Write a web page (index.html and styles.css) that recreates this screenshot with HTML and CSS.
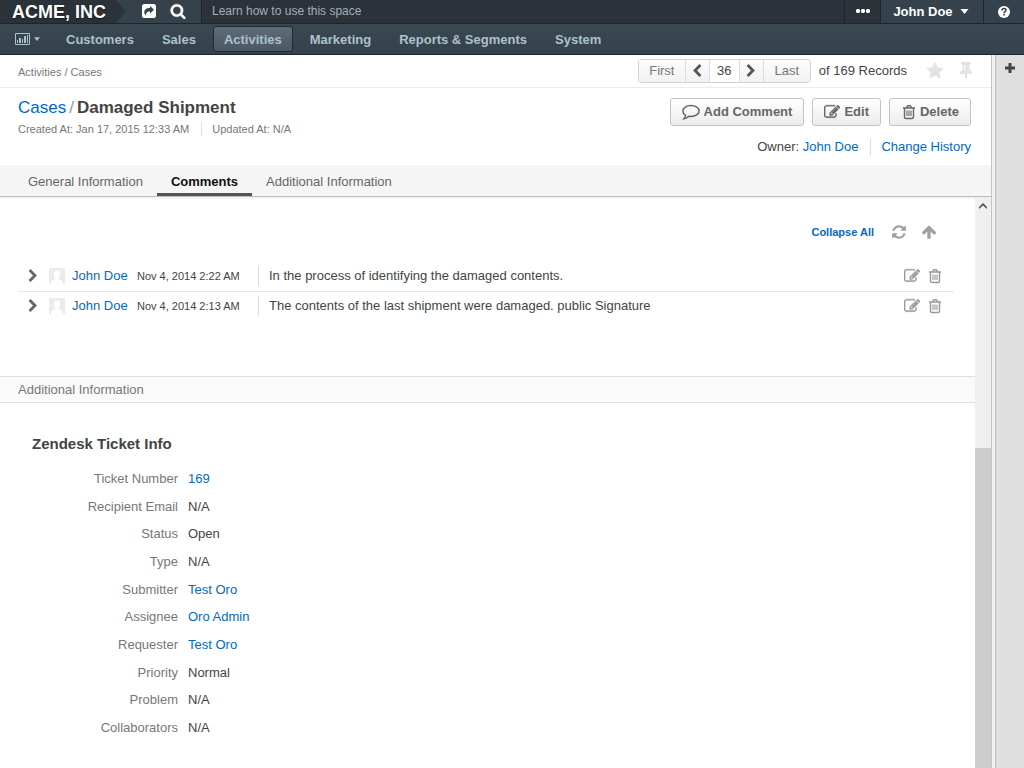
FILE: index.html
```html
<!DOCTYPE html>
<html lang="en">
<head>
<meta charset="utf-8">
<title>Damaged Shipment - Cases - Activities</title>
<link rel="stylesheet" href="styles.css">
</head>
<body>
<svg class="sprite" aria-hidden="true">
  <symbol id="chevron-right" viewBox="0 0 1792 1792"><path d="M1363 877l-742 742q-19 19-45 19t-45-19l-166-166q-19-19-19-45t19-45l531-531-531-531q-19-19-19-45t19-45l166-166q19-19 45-19t45 19l742 742q19 19 19 45t-19 45z"/></symbol>
  <symbol id="chevron-left" viewBox="0 0 1792 1792"><path d="M1427 301l-531 531 531 531q19 19 19 45t-19 45l-166 166q-19 19-45 19t-45-19l-742-742q-19-19-19-45t19-45l742-742q19-19 45-19t45 19l166 166q19 19 19 45t-19 45z"/></symbol>
  <symbol id="edit" viewBox="0 0 1792 1792"><path d="M888 1184l116-116-152-152-116 116v56h96v96h56zm440-720q-16-16-33 1l-350 350q-17 17-1 33t33-1l350-350q17-17 1-33zm80 594v190q0 119-84.5 203.5t-203.5 84.5h-832q-119 0-203.5-84.5t-84.5-203.5v-832q0-119 84.5-203.5t203.5-84.5h832q63 0 117 25 15 7 18 23 3 17-9 29l-49 49q-14 14-32 8-23-6-45-6h-832q-66 0-113 47t-47 113v832q0 66 47 113t113 47h832q66 0 113-47t47-113v-126q0-13 9-22l64-64q15-15 35-7t20 29zm-96-738l288 288-672 672h-288v-288zm444 132l-92 92-288-288 92-92q28-28 68-28t68 28l152 152q28 28 28 68t-28 68z" stroke="currentColor" stroke-width="40"/></symbol>
  <symbol id="trash" viewBox="0 0 14 16"><path d="M1 4h12M5 4V2.500C5 2 5.500 1.700 6 1.700h2c.5 0 1 .3 1 .8V4M2.500 4v9c0 .9.600 1.500 1.500 1.500h6c.9 0 1.500-.6 1.500-1.500V4" fill="none" stroke="currentColor" stroke-width="1.400"/><path d="M5 6.500V12M7 6.500V12M9 6.500V12" fill="none" stroke="currentColor" stroke-width="1.100"/></symbol>
  <symbol id="refresh" viewBox="0 0 1792 1792"><path d="M1639 1056q0 5-1 7-64 268-268 434.500t-478 166.500q-146 0-282.500-55t-243.500-157l-129 129q-19 19-45 19t-45-19-19-45v-448q0-26 19-45t45-19h448q26 0 45 19t19 45-19 45l-137 137q71 66 161 102t187 36q134 0 250-65t186-179q11-17 53-117 8-23 30-23h192q13 0 22.500 9.500t9.500 22.500zm25-800v448q0 26-19 45t-45 19h-448q-26 0-45-19t-19-45 19-45l138-138q-148-137-349-137-134 0-250 65t-186 179q-11 17-53 117-8 23-30 23h-199q-13 0-22.500-9.500t-9.500-22.500v-7q65-268 270-434.500t480-166.500q146 0 284 55.500t245 156.500l130-129q19-19 45-19t45 19 19 45z"/></symbol>
  <symbol id="arrow-up" viewBox="0 0 1792 1792"><path d="M1675 971q0 51-37 90l-75 75q-38 38-91 38-54 0-90-38l-294-293v704q0 52-37.500 84.500t-90.500 32.500h-128q-53 0-90.500-32.500t-37.500-84.500v-704l-294 293q-36 38-90 38t-90-38l-75-75q-38-38-38-90 0-53 38-91l651-651q35-37 90-37 54 0 91 37l651 651q37 39 37 91z"/></symbol>
  <symbol id="star" viewBox="0 0 1792 1792"><path d="M1728 647q0 22-26 48l-363 354 86 500q1 7 1 20 0 21-10.500 35.500t-30.500 14.500q-19 0-40-12l-449-236-449 236q-22 12-40 12-21 0-31.500-14.500t-10.500-35.500q0-6 2-20l86-500-364-354q-25-27-25-48 0-37 56-46l502-73 225-455q19-41 49-41t49 41l225 455 502 73q56 9 56 46z"/></symbol>
  <symbol id="search" viewBox="0 0 1792 1792"><path d="M1216 832q0-185-131.500-316.500t-316.500-131.500-316.500 131.500-131.500 316.500 131.500 316.500 316.500 131.500 316.500-131.500 131.500-316.500zm512 832q0 52-38 90t-90 38q-54 0-90-38l-343-342q-179 124-399 124-143 0-273.500-55.500t-225-150-150-225-55.500-273.500 55.500-273.500 150-225 225-150 273.500-55.500 273.500 55.500 225 150 150 225 55.500 273.500q0 220-124 399l343 343q37 37 37 90z" stroke="currentColor" stroke-width="50"/></symbol>
  <symbol id="pin" viewBox="0 0 14 18"><path d="M2 0h10v2.500h-1.500V8L13 9.500V12H8v4l-1 2-1-2v-4H1V9.500L3.500 8V2.500H2z"/><path d="M5.500 3v4.500" stroke="#fff" stroke-width="1"/></symbol>
  <symbol id="comment" viewBox="0 0 16 14"><path d="M8 1.200c4 0 7.200 2.100 7.200 4.900S12 11 8 11c-.7 0-1.300-.1-1.900-.2C5 11.900 3.600 12.700 1.800 13c.8-.9 1.200-1.800 1.400-3C1.700 9.100.8 7.700.8 6.100.8 3.300 4 1.200 8 1.200z" fill="none" stroke="currentColor" stroke-width="1.300"/></symbol>
  <symbol id="share" viewBox="0 0 14 14"><path fill-rule="evenodd" d="M2.500 0h9A2.500 2.500 0 0 1 14 2.500v9a2.500 2.500 0 0 1-2.500 2.500h-9A2.500 2.500 0 0 1 0 11.500v-9A2.500 2.500 0 0 1 2.500 0zM8 2v2C4.500 4 2.300 5.500 2.300 8.300c0 1.300.6 2.400 1.800 3.200C4 8.800 4.800 7.500 8 7.500v2l4-3.800z"/></symbol>
  <symbol id="question" viewBox="0 0 12 12"><circle cx="6" cy="6" r="6"/><path d="M4 4.600C4 3.300 4.900 2.600 6 2.600s2 .7 2 1.700C8 5.700 6.100 5.600 6.100 7.200" fill="none" stroke="#35424c" stroke-width="1.500"/><path d="M5.300 8.100h1.600v1.500H5.300z" fill="#35424c"/></symbol>
  <symbol id="chart" viewBox="0 0 15 12"><path d="M.5.500h14v11H.5z" fill="none" stroke="currentColor"/><path d="M2 7h1v3H2zM4 5h2v5H4zM7 6h1v4H7zM9 3h2v7H9zM12 2h1v8h-1z"/></symbol>
  <symbol id="person" viewBox="0 0 16 16"><path d="M1 0h14a1 1 0 0 1 1 1v15H0V1a1 1 0 0 1 1-1z" fill="#ebebeb"/><path d="M8 2.500c2.200 0 3.200 1.500 3.200 3.500 0 1.700-.8 3-1.500 3.700 0 1.300.3 1.700 1.800 2.300 1.700.6 2.500 1.500 2.500 4H2c0-2.500.8-3.400 2.500-4 1.500-.6 1.800-1 1.800-2.300C5.600 9 4.800 7.700 4.800 6c0-2 1-3.500 3.200-3.500z" fill="#fff"/></symbol>
  <symbol id="caret" viewBox="0 0 8 5"><path d="M0 0h8L4 5z"/></symbol>
  <symbol id="dots" viewBox="0 0 14 4"><path d="M1 0h2l1 1v2L3 4H1L0 3V1zM6 0h2l1 1v2L8 4H6L5 3V1zM11 0h2l1 1v2l-1 1h-2l-1-1V1z"/></symbol>
  <symbol id="plus" viewBox="0 0 10 10"><path d="M3.500 0h3v3.500H10v3H6.500V10h-3V6.500H0v-3h3.500z"/></symbol>
  <symbol id="scroll-up" viewBox="0 0 8 6"><path d="M0 4l4-4 4 4v2L4 2.500 0 6z"/></symbol>
</svg>

<header class="topbar">
  <a class="brand" href="#">ACME, INC</a>
  <div class="quick">
    <button class="plain" aria-label="Shortcuts"><svg class="i14"><use href="#share"/></svg></button>
    <button class="plain" aria-label="Search"><svg class="i16"><use href="#search"/></svg></button>
  </div>
  <a class="learn" href="#">Learn how to use this space</a>
  <button class="plain more" aria-label="More"><svg class="dots"><use href="#dots"/></svg></button>
  <button class="plain user">John Doe <svg class="caret"><use href="#caret"/></svg></button>
  <button class="plain help" aria-label="Help"><svg class="i12"><use href="#question"/></svg></button>
</header>

<nav class="mainnav">
  <a class="dash" href="#" aria-label="Dashboards"><svg class="chart"><use href="#chart"/></svg><svg class="caret-small"><use href="#caret"/></svg></a>
  <a href="#">Customers</a>
  <a href="#">Sales</a>
  <a class="current" href="#">Activities</a>
  <a href="#">Marketing</a>
  <a href="#">Reports &amp; Segments</a>
  <a href="#">System</a>
</nav>

<div class="shell">
  <main class="page">
    <div class="crumbbar">
      <div class="crumbs">Activities / Cases</div>
      <div class="pager">
        <button class="first">First</button>
        <button class="step" aria-label="Previous"><svg class="i14"><use href="#chevron-left"/></svg></button>
        <input type="text" value="36" aria-label="Record number">
        <button class="step" aria-label="Next"><svg class="i14"><use href="#chevron-right"/></svg></button>
        <button class="last">Last</button>
      </div>
      <span class="total">of 169 Records</span>
      <button class="plain faint" aria-label="Favorite"><svg class="i18"><use href="#star"/></svg></button>
      <button class="plain faint" aria-label="Pin"><svg class="pin"><use href="#pin"/></svg></button>
    </div>

    <div class="titlebar">
      <div>
        <h1><a href="#">Cases</a><span class="slash">/</span>Damaged Shipment</h1>
        <div class="stamps"><span>Created At: Jan 17, 2015 12:33 AM</span><span>Updated At: N/A</span></div>
      </div>
      <div class="side">
        <div class="actions">
          <button class="btn"><svg class="bubble"><use href="#comment"/></svg>Add Comment</button>
          <button class="btn"><svg class="i16"><use href="#edit"/></svg>Edit</button>
          <button class="btn"><svg class="bin"><use href="#trash"/></svg>Delete</button>
        </div>
        <div class="owner"><span>Owner: <a href="#">John Doe</a></span><a class="history" href="#">Change History</a></div>
      </div>
    </div>

    <nav class="tabs">
      <a href="#">General Information</a>
      <a class="active" href="#">Comments</a>
      <a href="#">Additional Information</a>
    </nav>

    <div class="pane">
      <div class="content">
        <section class="comments">
          <div class="tools">
            <button class="plain collapse">Collapse All</button>
            <button class="plain" aria-label="Refresh"><svg class="i16"><use href="#refresh"/></svg></button>
            <button class="plain" aria-label="Sort"><svg class="i16"><use href="#arrow-up"/></svg></button>
          </div>
          <article class="comment">
            <button class="plain open" aria-label="Expand"><svg class="i14"><use href="#chevron-right"/></svg></button>
            <svg class="i16"><use href="#person"/></svg>
            <a class="author" href="#">John Doe</a>
            <time>Nov 4, 2014 2:22 AM</time>
            <p>In the process of identifying the damaged contents.</p>
            <button class="plain" aria-label="Edit comment"><svg class="i16"><use href="#edit"/></svg></button>
            <button class="plain" aria-label="Delete comment"><svg class="bin"><use href="#trash"/></svg></button>
          </article>
          <article class="comment">
            <button class="plain open" aria-label="Expand"><svg class="i14"><use href="#chevron-right"/></svg></button>
            <svg class="i16"><use href="#person"/></svg>
            <a class="author" href="#">John Doe</a>
            <time>Nov 4, 2014 2:13 AM</time>
            <p>The contents of the last shipment were damaged. public Signature</p>
            <button class="plain" aria-label="Edit comment"><svg class="i16"><use href="#edit"/></svg></button>
            <button class="plain" aria-label="Delete comment"><svg class="bin"><use href="#trash"/></svg></button>
          </article>
        </section>

        <h2 class="band">Additional Information</h2>
        <section class="ticket">
          <h3>Zendesk Ticket Info</h3>
          <dl>
            <dt>Ticket Number</dt><dd><a href="#">169</a></dd>
            <dt>Recipient Email</dt><dd>N/A</dd>
            <dt>Status</dt><dd>Open</dd>
            <dt>Type</dt><dd>N/A</dd>
            <dt>Submitter</dt><dd><a href="#">Test Oro</a></dd>
            <dt>Assignee</dt><dd><a href="#">Oro Admin</a></dd>
            <dt>Requester</dt><dd><a href="#">Test Oro</a></dd>
            <dt>Priority</dt><dd>Normal</dd>
            <dt>Problem</dt><dd>N/A</dd>
            <dt>Collaborators</dt><dd>N/A</dd>
          </dl>
        </section>
      </div>
      <div class="scrollbar"><svg class="up"><use href="#scroll-up"/></svg><div class="thumb"></div></div>
    </div>
  </main>
  <aside class="rail"><button class="plain" aria-label="Add widget"><svg class="i10"><use href="#plus"/></svg></button></aside>
</div>
</body>
</html>
```
FILE: styles.css
```css
* { box-sizing: border-box; }
body {
  margin: 0;
  min-height: 100vh;
  display: flex;
  flex-direction: column;
  font: 13px/20px "Liberation Sans", Arial, sans-serif;
  color: #444;
  background: #fff;
}
a { color: #0069c8; text-decoration: none; }
h1, h2, h3, p, dl, dd { margin: 0; }
button, input { font: inherit; color: inherit; margin: 0; }
svg { fill: currentColor; flex: none; display: block; }
.sprite { position: absolute; width: 0; height: 0; }
.i10 { width: 10px; height: 10px; }
.i12 { width: 12px; height: 12px; }
.i14 { width: 14px; height: 14px; }
.i16 { width: 16px; height: 16px; }
.i18 { width: 18px; height: 18px; }
.bin { width: 14px; height: 16px; }
.plain {
  display: flex;
  align-items: center;
  justify-content: center;
  padding: 0;
  border: 0;
  background: none;
}

.topbar {
  display: flex;
  height: 24px;
  background: #2c3239;
  border-bottom: 1px solid #1d252d;
  color: #fff;
  isolation: isolate;
}
.brand {
  width: 126px;
  padding-left: 12px;
  font-size: 18px;
  line-height: 24px;
  font-weight: bold;
  color: #fff;
  background: #2c3239;
  text-shadow: 0 1px 2px #14181c;
  clip-path: polygon(0 0, 116px 0, 100% 50%, 116px 100%, 0 100%);
}
.quick {
  z-index: -1;
  display: flex;
  width: 86px;
  margin-left: -10px;
  padding: 0 15px 0 26px;
  justify-content: space-between;
  background: #35424c;
  border-right: 1px solid #1d252d;
}
.quick .plain { padding-bottom: 2px; }
.learn { flex: 1; padding-left: 10px; font-size: 12px; line-height: 22px; color: #a4afb7; }
.more { width: 37px; padding-bottom: 2px; border-left: 1px solid #1d252d; border-right: 1px solid #1d252d; }
.dots { width: 14px; height: 4px; }
.user { width: 102px; gap: 7px; padding-right: 2px; font-weight: bold; background: #35424c; }
.caret { width: 9px; height: 5px; }
.help { width: 41px; background: #35424c; border-left: 1px solid #1d252d; }

.mainnav {
  display: flex;
  align-items: center;
  height: 31px;
  padding-left: 15px;
  gap: 6px;
  background: linear-gradient(#3a4852, #35414b);
  border-bottom: 1px solid #1d252d;
}
.mainnav a {
  padding: 1px 10px 0;
  font-weight: bold;
  line-height: 23px;
  color: #abc1cc;
  border: 1px solid transparent;
  border-radius: 3px;
}
.mainnav .dash { display: flex; align-items: center; gap: 4px; padding: 0; margin-right: 9px; border: 0; }
.mainnav .current { background: linear-gradient(#5f6c79, #4b5763); border-color: #20272f; }
.chart { width: 15px; height: 12px; }
.caret-small { width: 6px; height: 4px; }

.shell { flex: 1; display: flex; background: #f2f2f2; }
.page {
  flex: 1;
  min-width: 0;
  display: flex;
  flex-direction: column;
  background: #fff;
  border-right: 1px solid #c4c4c4;
}
.rail {
  width: 29px;
  margin-left: 3px;
  padding: 8px 0 0 9px;
  background: #dfdfdf;
  border-left: 1px solid #bbb;
  color: #444;
}

.crumbbar {
  display: flex;
  align-items: center;
  height: 33px;
  padding: 0 18px;
  border-bottom: 1px solid #ececec;
}
.crumbs { flex: 1; padding-top: 2px; font-size: 11px; color: #777; }
.pager { display: flex; height: 24px; border: 1px solid #d4d4d4; border-radius: 3px; overflow: hidden; }
.pager button {
  display: flex;
  align-items: center;
  justify-content: center;
  padding: 0;
  border: 0;
  color: #777;
  background: linear-gradient(#fdfdfd, #f2f2f2);
}
.pager .first { width: 46px; }
.pager .last { width: 46px; }
.pager .step { width: 25px; color: #555; border: solid #ddd; border-width: 0 1px; }
.pager input { width: 29px; padding: 0; border: 0; text-align: center; background: #fff; }
.total { margin: 0 19px 0 8px; }
.faint { color: #e3e3e3; margin-right: 15px; }
.faint:last-child { margin-right: 0; }
.pin { width: 14px; height: 18px; }

.titlebar { display: flex; justify-content: space-between; height: 77px; padding: 9px 20px 0 18px; }
h1 { font-size: 17px; line-height: 22px; }
h1 a { font-weight: normal; }
.slash { margin: 0 3px; font-weight: normal; color: #999; }
.stamps { display: flex; margin-top: 3px; font-size: 11px; line-height: 14px; color: #777; }
.stamps span + span { margin-left: 12px; padding-left: 10px; border-left: 1px solid #ddd; }
.actions { display: flex; justify-content: flex-end; gap: 8px; margin-top: 1px; }
.btn {
  display: flex;
  align-items: center;
  gap: 4px;
  height: 28px;
  padding: 0 11px;
  font-weight: bold;
  color: #666;
  background: linear-gradient(#fff, #ececec);
  border: 1px solid #c4c4c4;
  border-radius: 3px;
}
.btn .bin { margin-left: 1px; }
.bubble { width: 18px; height: 16px; }
.owner { display: flex; justify-content: flex-end; align-items: center; margin-top: 11px; line-height: 20px; }
.history { margin-left: 12px; padding-left: 10px; line-height: 16px; border-left: 1px solid #ddd; }

.tabs { display: flex; height: 32px; padding-left: 14px; background: #f5f5f5; border-bottom: 1px solid #bbb; }
.tabs a { padding: 1px 14px 0; line-height: 32px; color: #666; }
.tabs .active { font-weight: bold; color: #111; border-bottom: 3px solid #555; }

.pane { flex: 1; display: flex; }
.content { flex: 1; min-width: 0; border-top: 2px solid #f5f5f5; }
.scrollbar {
  display: flex;
  flex-direction: column;
  align-items: center;
  width: 16px;
  background: #efefef;
}
.up { width: 8px; height: 6px; margin-top: 6px; color: #555; }
.thumb { flex: 0 0 56%; width: 100%; margin-top: auto; background: #cdcdcd; }

.comments { padding: 23px 21px 54px 18px; }
.tools { display: flex; align-items: center; gap: 14px; justify-content: flex-end; margin: 0 17px 20px 0; color: #a0a0a0; }
.collapse { margin-right: 3px; font-size: 11px; font-weight: bold; color: #0069c8; }
.comment {
  display: flex;
  align-items: center;
  height: 30px;
  padding-bottom: 2px;
  color: #999;
  border-bottom: 1px solid #e6e6e6;
}
.comment:last-child { border-color: transparent; }
.comment .open { margin-right: 9px; padding-left: 8px; color: #666; }
.author { width: 72px; padding-left: 7px; }
time { width: 121px; padding-top: 1px; font-size: 11px; color: #444; }
.comment p { flex: 1; padding-left: 10px; color: #444; border-left: 1px solid #ddd; }
.comment p ~ button { margin-right: 8px; }
.comment button:last-child { margin-right: 12px; }

.band {
  padding: 3px 18px 2px;
  font-size: 13px;
  font-weight: normal;
  color: #777;
  background: #fafafa;
  border: solid #e0e0e0;
  border-width: 1px 0;
}
.ticket { padding: 31px 0 26px; }
h3 { padding-left: 32px; margin-bottom: 11px; font-size: 15px; }
dl {
  display: grid;
  grid-template-columns: 178px 1fr;
  grid-auto-rows: 1fr;
  column-gap: 10px;
  align-items: center;
  min-height: 277px;
}
dt { text-align: right; color: #777; }
```
